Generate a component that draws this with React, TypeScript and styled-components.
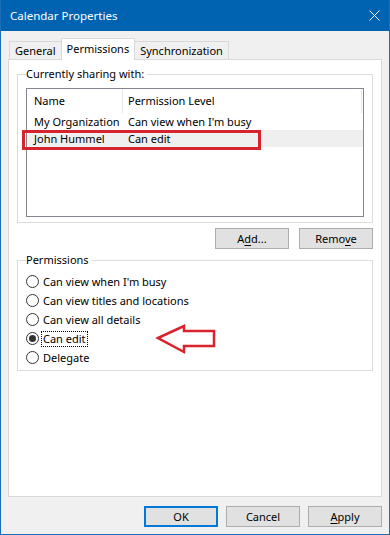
import styled, { createGlobalStyle } from "styled-components";

const GlobalStyle = createGlobalStyle`
  html, body {
    margin: 0;
    padding: 0;
    background: #ffffff;
  }
  body {
    font-family: "Noto Sans", "Open Sans", sans-serif;
    font-size: 11px;
    color: #000000;
  }
  * {
    box-sizing: border-box;
  }
`;

const Window = styled.div`
  position: relative;
  width: 390px;
  height: 535px;
  border: 1px solid #1b6db5;
  border-top: none;
  background: #f0f0f0;
  display: flex;
  flex-direction: column;
`;

const TitleBar = styled.div`
  height: 31px;
  background: #0063b1;
  color: #ffffff;
  padding: 0 9px 0 9px;
  display: flex;
  align-items: center;
  justify-content: space-between;
  font-size: 11.5px;
`;

const Body = styled.div`
  padding: 7px 7px 0 7px;
  display: flex;
  flex-direction: column;
`;

const TabStrip = styled.div`
  display: flex;
  align-items: flex-end;
  height: 21px;
  padding-left: 1px;
  position: relative;
  z-index: 1;
`;

const Tab = styled.div<{ $active?: boolean }>`
  height: ${(p) => (p.$active ? 22 : 18)}px;
  margin-bottom: ${(p) => (p.$active ? -1 : 0)}px;
  padding: ${(p) => (p.$active ? "1px 5px 0" : "0 5px")};
  line-height: ${(p) => (p.$active ? 18 : 17)}px;
  border: 1px solid #d9d9d9;
  border-bottom: none;
  background: ${(p) => (p.$active ? "#ffffff" : "#f0f0f0")};
  white-space: nowrap;

  & + & {
    margin-left: -1px;
  }
`;

const Panel = styled.div`
  height: 438px;
  background: #ffffff;
  border: 1px solid #d9d9d9;
  padding: 6px 8px 0;
  display: flex;
  flex-direction: column;
`;

const Group = styled.fieldset<{ $pt: number; $pb: number }>`
  margin: 0;
  min-width: 0;
  border: 1px solid #dcdcdc;
  padding: ${(p) => p.$pt}px 8px ${(p) => p.$pb}px;

  legend {
    padding: 0 3px 0 0;
    line-height: 16px;
  }
`;

const ListBox = styled.div`
  height: 129px;
  border: 1px solid #828790;
  background: #ffffff;
  display: flex;
  flex-direction: column;
`;

const ListRow = styled.div<{ $header?: boolean; $selected?: boolean }>`
  display: grid;
  grid-template-columns: 96px 1fr;
  height: ${(p) => (p.$header ? 24 : 17)}px;
  line-height: ${(p) => (p.$header ? 24 : 17)}px;
  background: ${(p) => (p.$selected ? "#efefef" : "transparent")};
  margin-right: ${(p) => (p.$header ? 1 : 0)}px;
  border-right: ${(p) => (p.$header ? "1px solid #e5e5e5" : "none")};
`;

const Cell = styled.div<{ $first?: boolean; $header?: boolean }>`
  padding-left: ${(p) => (p.$first ? 7 : 5)}px;
  white-space: nowrap;
  overflow: hidden;
  border-right: ${(p) => (p.$first && p.$header ? "1px solid #e5e5e5" : "none")};
`;

const ButtonRow = styled.div<{ $gap: number }>`
  display: flex;
  justify-content: flex-end;
  gap: ${(p) => p.$gap}px;
`;

const ActionRow = styled(ButtonRow)`
  margin: 5px 0 3px;
`;

const Footer = styled(ButtonRow)`
  padding: 9px 0 0 0;
`;

const Button = styled.button<{ $default?: boolean }>`
  width: 74px;
  height: 21px;
  padding: 0;
  font-family: inherit;
  font-size: 11px;
  color: #000000;
  background: #e1e1e1;
  border: ${(p) => (p.$default ? "2px solid #0078d7" : "1px solid #adadad")};
  border-radius: 0;

  u {
    text-decoration-thickness: 1px;
    text-underline-offset: 2px;
  }
`;

const Option = styled.label`
  display: flex;
  align-items: center;
  height: 19px;
`;

const RadioCircle = styled.span<{ $checked?: boolean }>`
  width: 13px;
  height: 13px;
  flex-shrink: 0;
  border-radius: 50%;
  border: 1px solid #333333;
  background: #ffffff;
  display: flex;
  align-items: center;
  justify-content: center;

  &::after {
    content: "";
    width: 7px;
    height: 7px;
    border-radius: 50%;
    background: ${(p) => (p.$checked ? "#333333" : "transparent")};
  }
`;

const OptionText = styled.span<{ $focused?: boolean }>`
  margin-left: 2px;
  padding: 0 1px;
  line-height: 14px;
  border: 1px dotted ${(p) => (p.$focused ? "#000000" : "transparent")};
`;

const Highlight = styled.div`
  position: absolute;
  left: 21px;
  top: 130px;
  width: 239px;
  height: 20px;
  border: 3px solid #d6232d;
  pointer-events: none;
`;

const Arrow = styled.svg`
  position: absolute;
  left: 153px;
  top: 321px;
  pointer-events: none;
`;

const permissions = [
  "Can view when I'm busy",
  "Can view titles and locations",
  "Can view all details",
  "Can edit",
  "Delegate",
];

const App = () => {
  const selected = "Can edit";
  return (
    <>
      <GlobalStyle />
      <Window>
        <TitleBar>
          <span>Calendar Properties</span>
          <svg width="11" height="11" viewBox="0 0 11 11">
            <path d="M0.5 0.5 L10.5 10.5 M10.5 0.5 L0.5 10.5" stroke="#ffffff" strokeWidth="1" />
          </svg>
        </TitleBar>
        <Body>
          <TabStrip>
            <Tab>General</Tab>
            <Tab $active>Permissions</Tab>
            <Tab>Synchronization</Tab>
          </TabStrip>
          <Panel>
            <Group $pt={6} $pb={5}>
              <legend>Currently sharing with:</legend>
              <ListBox>
                <ListRow $header>
                  <Cell $first $header>
                    Name
                  </Cell>
                  <Cell $header>Permission Level</Cell>
                </ListRow>
                <ListRow>
                  <Cell $first>My Organization</Cell>
                  <Cell>Can view when I'm busy</Cell>
                </ListRow>
                <ListRow $selected>
                  <Cell $first>John Hummel</Cell>
                  <Cell>Can edit</Cell>
                </ListRow>
              </ListBox>
            </Group>
            <ActionRow $gap={10}>
              <Button>
                A<u>d</u>d...
              </Button>
              <Button>
                Remo<u>v</u>e
              </Button>
            </ActionRow>
            <Group $pt={4} $pb={3}>
              <legend>Permissions</legend>
              {permissions.map((label) => (
                <Option key={label}>
                  <RadioCircle $checked={label === selected} />
                  <OptionText $focused={label === selected}>{label}</OptionText>
                </Option>
              ))}
            </Group>
          </Panel>
          <Footer $gap={8}>
            <Button $default>OK</Button>
            <Button>Cancel</Button>
            <Button>
              <u>A</u>pply
            </Button>
          </Footer>
        </Body>
        <Highlight />
        <Arrow width="64" height="36" viewBox="0 0 64 36">
          <polygon
            points="4,17 30,5 30,10 60,10 60,25 30,25 30,31"
            fill="none"
            stroke="#d9232d"
            strokeWidth="2.5"
          />
        </Arrow>
      </Window>
    </>
  );
};

export default App;
